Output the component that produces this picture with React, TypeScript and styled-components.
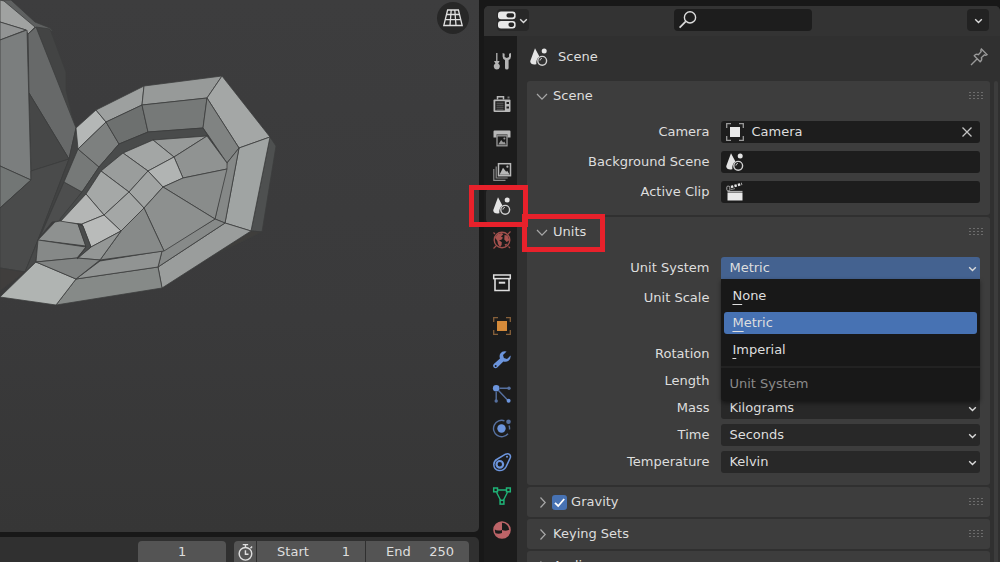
import React, { useState } from "react";
import styled, { createGlobalStyle, css } from "styled-components";

const GlobalStyle = createGlobalStyle`
  * { box-sizing: border-box; }
  body {
    margin: 0;
    background: #181818;
    color: #dedede;
    font-family: "DejaVu Sans", sans-serif;
    font-size: 13px;
    line-height: 18px;
  }
  button, input, select { font: inherit; color: inherit; }
  button { border: 0; padding: 0; background: none; cursor: pointer; }
  svg { display: block; flex: none; }
`;

/* ---------- Layout ---------- */

const Workspace = styled.div`
  display: grid;
  grid-template-columns: 13fr 14fr;
  grid-template-rows: minmax(0, 1fr);
  gap: 5px;
  height: 100vh;
  overflow: hidden;
`;

const MainColumn = styled.div`
  display: flex;
  flex-direction: column;
  gap: 5px;
  min-width: 0;
`;

const Viewport = styled.main`
  position: relative;
  flex: 1;
  min-height: 0;
  overflow: hidden;
  border-radius: 0 0 5px 0;
  background: linear-gradient(#3d3d3e, #3a3a3b 60%, #363636);
`;

const ViewToggle = styled.button`
  position: absolute;
  top: 2px;
  right: 10px;
  display: grid;
  place-items: center;
  width: 32px;
  height: 32px;
  border-radius: 50%;
  background: #272727;
`;

const Timeline = styled.footer`
  display: flex;
  justify-content: flex-end;
  gap: 8px;
  padding: 4px 10px 0 0;
  border-radius: 0 5px 0 0;
  background: #303030;
`;

const fieldBox = css`
  display: flex;
  align-items: center;
  height: 21px;
  background: #545454;
`;

const FrameInput = styled.input`
  ${fieldBox}
  width: 88px;
  border: 0;
  border-radius: 4px 4px 0 0;
  text-align: center;
`;

const RangeGroup = styled.div`
  display: flex;
  gap: 1px;
`;

const ClockButton = styled.button`
  ${fieldBox}
  justify-content: center;
  width: 22px;
  border-radius: 4px 0 0 0;
`;

const RangeField = styled.label<{ $last?: boolean }>`
  ${fieldBox}
  width: ${(p) => (p.$last ? 103 : 108)}px;
  padding: 0 15px 0 20px;
  border-radius: ${(p) => (p.$last ? "0 4px 0 0" : "0")};
`;

const RangeInput = styled.input`
  flex: 1;
  min-width: 0;
  padding: 0;
  border: 0;
  background: none;
  text-align: right;
`;

/* ---------- Properties editor ---------- */

const Editor = styled.aside`
  display: flex;
  flex-direction: column;
  min-width: 0;
  min-height: 0;
  margin-top: 6px;
  border-radius: 5px 5px 0 0;
  background: #303030;
`;

const EditorHeader = styled.header`
  display: grid;
  grid-template-columns: 1fr 138px 1fr;
  align-items: center;
  flex: none;
  height: 30px;
  padding: 0 11px 2px 13px;
  border-radius: 5px 5px 0 0;
  background: #333333;
`;

const EditorType = styled.button`
  display: flex;
  align-items: center;
  gap: 2px;
  width: 32px;
  height: 22px;
  border-radius: 4px;
  background: #282828;
`;

const SearchBox = styled.label`
  display: flex;
  align-items: center;
  gap: 4px;
  height: 22px;
  padding: 0 4px;
  border-radius: 4px;
  background: #1d1d1d;
`;

const SearchInput = styled.input`
  flex: 1;
  min-width: 0;
  border: 0;
  background: none;
  outline: 0;
`;

const OptionsButton = styled.button`
  display: grid;
  place-items: center;
  justify-self: end;
  width: 22px;
  height: 22px;
  border-radius: 4px;
  background: #222222;
`;

const EditorBody = styled.div`
  display: flex;
  flex: 1;
  min-height: 0;
`;

const TabStrip = styled.nav`
  display: flex;
  flex-direction: column;
  gap: 9px;
  flex: none;
  width: 33px;
  padding: 8px 0 0 2px;
  background: #1c1c1c;
`;

const TabGroup = styled.div`
  display: flex;
  flex-direction: column;
`;

const Tab = styled.button<{ $active?: boolean }>`
  position: relative;
  display: grid;
  place-items: center;
  height: 34px;
  border-radius: 4px 0 0 4px;
  background: ${(p) => (p.$active ? "#303030" : "transparent")};
`;

const Highlight = styled.span<{ $inset: string }>`
  position: absolute;
  z-index: 3;
  inset: ${(p) => p.$inset};
  border: 5px solid #e8212b;
  pointer-events: none;
`;

const Content = styled.section`
  flex: 1;
  min-width: 0;
  padding-left: 10px;
`;

const Breadcrumb = styled.div`
  display: flex;
  align-items: center;
  gap: 9px;
  height: 45px;
  padding: 0 11px 4px 2px;
`;

const PinButton = styled.button`
  margin-left: auto;
`;

const ScrollRow = styled.div`
  display: flex;
  gap: 4px;
  padding-right: 2px;
`;

const ScrollThumb = styled.div`
  width: 4px;
  border-radius: 2px;
  background: #3c3c3c;
`;

const PanelList = styled.div`
  display: flex;
  flex-direction: column;
  flex: 1;
  min-width: 0;
  gap: 2px;
`;

const Panel = styled.section`
  border-radius: 3px;
  background: #3d3d3d;
`;

const PanelHeader = styled.div`
  display: flex;
  align-items: center;
  height: 30px;
  padding: 0 7px 0 9px;
`;

const PanelToggle = styled.button`
  position: relative;
  display: flex;
  align-items: center;
  gap: 4px;
`;

const PanelTick = styled.label`
  display: flex;
  align-items: center;
  gap: 4px;
  margin-left: 3px;
`;

const GripSlot = styled.span`
  margin-left: auto;
`;

const PanelBody = styled.div`
  display: flex;
  flex-direction: column;
  gap: 7px;
  padding: 10px 10px 12px;
`;

const Rows = styled.div<{ $tight?: boolean }>`
  display: flex;
  flex-direction: column;
  gap: ${(p) => (p.$tight ? 5 : 8)}px;
`;

const Row = styled.div`
  display: grid;
  grid-template-columns: 2fr 3fr;
  align-items: center;
  gap: 12px;
  height: 22px;
`;

const RowLabel = styled.label`
  text-align: right;
  white-space: nowrap;
`;

const IdField = styled.div`
  display: flex;
  align-items: center;
  gap: 6px;
  height: 22px;
  padding: 0 7px 0 4px;
  border-radius: 3px;
  background: #1d1d1d;
`;

const IdInput = styled.input`
  flex: 1;
  min-width: 0;
  padding: 0;
  border: 0;
  outline: 0;
  background: none;
`;

const NumberInput = styled.input`
  width: 100%;
  height: 22px;
  border: 0;
  border-radius: 3px;
  background: #545454;
  text-align: center;
`;

const SelectWrap = styled.div`
  position: relative;
  display: grid;
  align-items: center;
`;

const SelectBox = styled.select<{ $open?: boolean }>`
  grid-area: 1 / 1;
  appearance: none;
  width: 100%;
  height: 22px;
  padding: 0 20px 0 8px;
  border: 0;
  outline: 0;
  border-radius: ${(p) => (p.$open ? "3px 3px 0 0" : "3px")};
  background: ${(p) => (p.$open ? "#446290" : "#282828")};
`;

const SelectArrow = styled.span`
  grid-area: 1 / 1;
  justify-self: end;
  margin-right: 3px;
  pointer-events: none;
`;

const Menu = styled.div`
  position: absolute;
  z-index: 2;
  top: 100%;
  left: 0;
  right: 0;
  display: flex;
  flex-direction: column;
  padding: 6px 3px 8px;
  border-radius: 0 0 4px 4px;
  background: #181818;
  box-shadow: 0 2px 4px rgba(0, 0, 0, 0.45);
`;

const MenuItem = styled.button<{ $selected?: boolean }>`
  height: 22px;
  margin-bottom: 5px;
  padding: 0 8px;
  border-radius: 3px;
  text-align: left;
  background: ${(p) => (p.$selected ? "#4772b3" : "transparent")};
`;

const Mnemonic = styled.span`
  text-decoration: underline;
  text-decoration-thickness: 1px;
  text-underline-offset: 4px;
`;

const MenuTitle = styled.div`
  margin: 0 -3px;
  padding: 7px 8px 0;
  border-top: 2px solid #222222;
  color: #8a8a8a;
`;

const CheckWrap = styled.span`
  display: grid;
  place-items: center;
`;

const CheckInput = styled.input`
  grid-area: 1 / 1;
  appearance: none;
  width: 15px;
  height: 15px;
  margin: 0;
  border-radius: 3px;
  background: #545454;
  &:checked { background: #4772b3; }
  & + svg { grid-area: 1 / 1; visibility: hidden; pointer-events: none; }
  &:checked + svg { visibility: visible; }
`;

/* ---------- Icons ---------- */

type IconProps = { size?: number; children: React.ReactNode };
const Icon = ({ size = 20, children }: IconProps) => (
  <svg width={size} height={size} viewBox="0 0 20 20" fill="none" aria-hidden="true">
    {children}
  </svg>
);

const Chevron = ({ open }: { open?: boolean }) => (
  <svg width="13" height="13" viewBox="0 0 13 13" fill="none" stroke="#a8a8a8" strokeWidth="1.2" aria-hidden="true">
    <path d={open ? "M1 4 6 9.2 11 4" : "M4.5 1.5 9.2 6.5 4.5 11.5"} />
  </svg>
);

const SmallArrow = () => (
  <svg width="9" height="7" viewBox="0 0 9 7" fill="none" stroke="#dcdcdc" strokeWidth="1.4" aria-hidden="true">
    <path d="M1.2 2.2 4.5 5.4 7.8 2.2" />
  </svg>
);

const Grip = () => (
  <svg width="15" height="8" viewBox="0 0 15 8" fill="#6c6c6c" aria-hidden="true">
    {[0, 3, 6].map((y) => [1, 5, 9, 13].map((x) => <rect key={`${x}-${y}`} x={x} y={y} width="2" height="1" />))}
  </svg>
);

const SceneIcon = () => (
  <Icon>
    <path d="M6 1.2 1.2 14.2Q1.6 17.6 5.8 17.4L7.4 17.2Q6.6 12.4 10.4 9.4Z" fill="#e4e4e4" />
    <circle cx="15.2" cy="4" r="2.5" fill="#e4e4e4" />
    <circle cx="13.2" cy="13.8" r="4.4" stroke="#d0d0d0" strokeWidth="1.4" />
    <path d="M10.9 13.6a2.3 2.3 0 0 1 2-2.2" stroke="#d0d0d0" />
  </Icon>
);

const ObjectIcon = ({ fill, frame }: { fill: string; frame: string }) => (
  <Icon>
    <rect x="5" y="5" width="10" height="10" fill={fill} />
    <path d="M1.7 6V1.7H6M14 1.7h4.3V6M18.3 14v4.3H14M6 18.3H1.7V14" stroke={frame} strokeWidth="1.3" />
  </Icon>
);

const ClipIcon = () => (
  <Icon>
    <rect x="2.5" y="10.5" width="15" height="8" fill="#e8e8e8" />
    <path d="M2.5 9.4h15" stroke="#bdbdbd" />
    <path d="M6 5 17 1.8" stroke="#e8e8e8" strokeWidth="2.4" strokeDasharray="2.4 1.2" />
    <rect x="1.8" y="4.2" width="3" height="4.5" rx="1" stroke="#a8a8a8" />
    <path d="M5.5 7.8 10 6.6" stroke="#888" />
  </Icon>
);

const PerspectiveIcon = () => (
  <svg width="22" height="20" viewBox="0 0 22 20" fill="none" stroke="#e0e0e0" strokeWidth="1.3" aria-hidden="true">
    <path d="M5.6 2h10.8L20.2 17.5H1.8zM9.2 2 8 17.5M12.8 2 14 17.5M4.6 6.5h12.8M3.4 11.6h15.2" />
  </svg>
);

const EditorTypeIcon = () => (
  <Icon>
    <rect x="1" y="1.600" width="17.600" height="7.600" rx="3" fill="#e8e8e8" />
    <rect x="9.500" y="3.200" width="7.600" height="4.400" rx="1.800" fill="#222" />
    <rect x="1" y="10.900" width="17.600" height="7.600" rx="3" fill="#e8e8e8" />
    <rect x="11.500" y="12.500" width="5.600" height="4.400" rx="1.800" fill="#222" />
  </Icon>
);

const SearchIcon = () => (
  <Icon>
    <circle cx="12" cy="7.400" r="5.600" stroke="#dcdcdc" strokeWidth="1.400" />
    <path d="M7.800 11.400 1.600 17.600" stroke="#dcdcdc" strokeWidth="1.700" />
  </Icon>
);

const PinIcon = () => (
  <Icon>
    <path
      d="M12.400 2 18 7.600Q16.600 8.600 15.400 7.900L12.400 10.600Q13.400 13.200 11.200 14.800L5.200 8.800Q6.800 6.600 9.400 7.600L12.100 4.600Q11.400 3.400 12.400 2ZM8 12 2 18"
      stroke="#999999"
      strokeWidth="1.400"
    />
  </Icon>
);

const CloseIcon = () => (
  <svg width="12" height="12" viewBox="0 0 12 12" fill="none" stroke="#c4c4c4" strokeWidth="1.300" aria-hidden="true">
    <path d="m1.500 1.500 9 9M10.500 1.500l-9 9" />
  </svg>
);

const ClockIcon = () => (
  <Icon size={18}>
    <circle cx="10.500" cy="12" r="7" stroke="#dedede" strokeWidth="1.600" />
    <path d="M10.500 8v4.400h3.400M7.500 1.800h6M10.500 2v3M16.100 5.800l1.800-1.800" stroke="#dedede" strokeWidth="1.600" />
  </Icon>
);

const TickIcon = () => (
  <svg width="13" height="13" viewBox="0 0 13 13" fill="none" stroke="#fff" strokeWidth="1.800" aria-hidden="true">
    <path d="M2 6.800 5.200 10 11.200 3" />
  </svg>
);

const ToolIcon = () => (
  <Icon>
    <path d="M4.800 2v8" stroke="#b4b4b4" strokeWidth="1.300" />
    <path d="M2 10h5.600L6.200 12.400Q8.400 13.600 7.800 16q-.6 2.600-3 2.600T1.800 16q-.6-2.400 1.600-3.600Z" fill="#b4b4b4" />
    <path
      d="M10.600 2v3.600q0 2.400 2.400 3.400V17q0 1.600 1.800 1.600t1.800-1.600V9q2.400-1 2.400-3.400V2l-2 .8V6l-2.200 1-2.200-1V2.800Z"
      fill="#b4b4b4"
    />
  </Icon>
);

const RenderIcon = () => (
  <Icon>
    <path d="M5.500 5.500V2.700h6v2.800" stroke="#b8b8b8" strokeWidth="1.500" />
    <rect x="1.500" y="5.500" width="17" height="12.500" rx="1" fill="#b8b8b8" />
    <rect x="3.300" y="7.200" width="9.500" height="9.200" fill="#1c1c1c" />
    <path d="M4.500 9.200h7M4.500 11.200h7M4.500 13.200h7M4.500 15.200h7" stroke="#777" strokeWidth=".8" />
    <path d="M14.500 9h2.500M14.500 13.500h2.500" stroke="#1c1c1c" strokeWidth="2" />
    <path d="M15.500 2.500h2v2h-2z" fill="#777" />
  </Icon>
);

const OutputIcon = () => (
  <Icon>
    <path d="M1.500 3.500q0-1 1-1h15q1 0 1 1v6h-3V6.500h-11v3h-3z" fill="#b8b8b8" />
    <rect x="5" y="7.800" width="10" height="10" stroke="#9a9a9a" strokeWidth="1.300" />
    <path d="m6.200 16.600 3-4.600 2 2.500 1-1 1.800 3.100z" fill="#9a9a9a" />
    <circle cx="12.400" cy="10.500" r="1" fill="#9a9a9a" />
  </Icon>
);

const LayersIcon = () => (
  <Icon>
    <rect x="6.500" y="1.700" width="12" height="12" stroke="#b8b8b8" strokeWidth="1.500" />
    <path d="m7.500 12.800 3.500-7 3.200 4 1-1 2.500 4z" fill="#b8b8b8" />
    <circle cx="15.400" cy="4.700" r="1.100" fill="#b8b8b8" />
    <path d="M4.200 4.500V16h11.500M1.800 7v11.400H13.500" stroke="#8a8a8a" strokeWidth="1.200" />
  </Icon>
);

const WorldIcon = () => (
  <Icon>
    <circle cx="10" cy="10" r="7.800" stroke="#a04f4c" strokeWidth="1.400" />
    <path
      d="M3 7.500 6 4l4-1 1.200 1.600L9 6.500l2 1.300-1.600 2-2.400.4 2.800 2-.2 2.800L8 17l-2-3-.6-3zM12.500 5l3 .6 1.800 4.600-2.600 1.800-2.400-2.600zM12.500 14.500l3-1-1.800 2.500z"
      fill="#a8524f"
    />
    <path d="m16 4 2.500-2.500M1.500 18.500 4 16M1.500 2.500l1.500 1.500M16.500 16.500l1.500 1.500" stroke="#a04f4c" strokeWidth="1.200" />
  </Icon>
);

const CollectionIcon = () => (
  <Icon>
    <rect x="1.700" y="2" width="16.600" height="3.600" stroke="#dedede" strokeWidth="1.500" />
    <path d="M3 5.600V17.500H17V5.600" stroke="#dedede" strokeWidth="1.600" />
    <path d="M6.800 9.700h6.400" stroke="#dedede" strokeWidth="2" />
  </Icon>
);

const WrenchIcon = () => (
  <Icon>
    <path
      d="M18.600 5.600 15 9 11.900 7.900 11 5 14.600 1.600Q10.600.4 8.400 3.600q-1.400 2.100-.4 4.800L1.800 14q-1.500 1.800 0 3.500 1.800 1.600 3.500 0l6.100-6.100q2.900.9 5.100-.7 2.500-1.900 2.100-5.100Z"
      fill="#6c95dd"
    />
    <circle cx="3.700" cy="15.900" r="1" fill="#1c1c1c" />
  </Icon>
);

const ParticlesIcon = () => (
  <Icon>
    <circle cx="4.200" cy="4.200" r="3.300" fill="#6c95dd" />
    <path d="M8 4.200h9M4.200 8v9M6.500 6.500 16 16.500" stroke="#56709f" strokeWidth="1.400" />
    <circle cx="17" cy="4.200" r="1.700" fill="#56709f" />
    <circle cx="4.200" cy="17" r="1.700" fill="#56709f" />
    <circle cx="16.600" cy="16.800" r="2" fill="#6c95dd" />
  </Icon>
);

const PhysicsIcon = () => (
  <Icon>
    <circle cx="9.500" cy="10.500" r="4.200" fill="#6c95dd" />
    <path d="M12.500 2.800A8.200 8.200 0 1 0 16 15.800M17 7.500q.8 2 .5 4" stroke="#56709f" strokeWidth="1.400" />
    <circle cx="16.500" cy="3.800" r="2.300" fill="#56709f" />
  </Icon>
);

const ConstraintIcon = () => (
  <Icon>
    <path
      d="M13.500 2.200Q16.500.9 18 3q1 1.700 0 3.400L14 14.800Q11.500 19 7 18.500 1.800 17.500 1.800 12.400 2 8.700 5.400 7Z"
      stroke="#6c95dd"
      strokeWidth="1.500"
    />
    <circle cx="7.800" cy="12.300" r="3.300" stroke="#6c95dd" strokeWidth="2.200" />
    <circle cx="15" cy="4.800" r="1" fill="#6c95dd" />
  </Icon>
);

const DataIcon = () => (
  <Icon>
    <path d="M5.500 4h9M4.500 6.200 8.700 14.500M15.500 6.200 11.300 14.500" stroke="#1fb377" strokeWidth="1.400" />
    <g stroke="#1fb377" strokeWidth="1.500">
      <rect x="1.700" y="2" width="3.800" height="3.800" />
      <rect x="14.500" y="2" width="3.800" height="3.800" />
      <rect x="8.100" y="14.300" width="3.800" height="3.800" />
    </g>
  </Icon>
);

const MaterialIcon = () => (
  <Icon>
    <circle cx="10" cy="10" r="8" stroke="#bd6468" strokeWidth="1.600" />
    <path d="M10 10V2Q3.500 2.500 2 9 5.500 11.500 10 10ZM10 10q4.500 1.500 8-.5-.5 8-8 8.500Z" fill="#bd6468" />
    <path d="M3 13q3.500 1.500 7 0v5Q5.500 17.500 3 13Z" fill="#bd6468" />
  </Icon>
);

/* ---------- Mesh in the 3D viewport ---------- */

const headFaces: [string, string][] = [
  ["0,0 11,0 35,22 50,28 53,31 36,29 28,34", "#5e6060"],
  ["0,0 4,1 35,27 28,34 26,30 0,22", "#a0a2a1"],
  ["0,22 26,30 0,40", "#929494"],
  ["36,27 50,29 66,72 66,90 75,128", "#434444"],
  ["28,34 36,27 76,128 69,159 29,93", "#676969"],
  ["29,93 69,159 31,171", "#464747"],
  ["0,40 27,30 31,180 0,166", "#7b7e7e"],
  ["0,166 31,180 0,208", "#727675"],
  ["31,171 69,159 38,240 25,272 0,268 0,208 31,180", "#4a4b4b"],
  ["0,268 25,272 0,291", "#403e3d"],
  ["38,240 25,272 36,262", "#484949"],
  ["76,128 78,149 64,182 38,240 69,159", "#424343"],
  ["64,182 82,192 60,221 52,222 40,237", "#4d4e4e"],
];

const earFaces: [string, string][] = [
  ["270,137 276,146 262,232 251,231", "#4e5050"],
  ["251,231 262,232 215,255", "#3f3e3c"],
  ["76,128 96,110 106,122 78,149", "#b4b7b6"],
  ["96,110 144,86 142,105 106,122", "#9da09f"],
  ["144,86 222,76 207,98 142,105", "#979a99"],
  ["222,76 270,137 239,148 207,98", "#a4a7a6"],
  ["270,137 251,231 225,223 239,148", "#a0a4a3"],
  ["251,231 162,288 158,267 225,223", "#9a9d9c"],
  ["162,288 56,305 76,279 158,267", "#868a88"],
  ["56,305 0,297 36,262 76,279", "#b0b4b2"],
  ["78,149 99,167 82,192 64,182", "#767978"],
  ["78,149 106,122 119,144 99,167", "#7d807f"],
  ["106,122 142,105 148,132 119,144", "#6d706f"],
  ["142,105 207,98 203,128 148,132", "#767978"],
  ["207,98 239,148 227,163 208,135 203,128", "#808382"],
  ["239,148 225,223 215,219 227,163", "#858887"],
  ["225,223 158,267 162,251 215,219", "#878a89"],
  ["158,267 76,279 100,261 162,251", "#919493"],
  ["82,192 99,167 119,144 148,132 203,128 208,136 153,140 123,153 101,171 86,194 60,222 60,219", "#494b4b"],
  ["153,140 207,136 174,157", "#979a99"],
  ["207,136 227,163 227,169 183,178 174,157", "#909392"],
  ["123,153 153,140 174,157 148,171", "#a3a6a5"],
  ["123,153 148,171 129,192 101,171", "#9a9d9c"],
  ["101,171 129,192 104,215 86,194", "#a5a8a7"],
  ["86,194 104,215 82,224 60,222", "#b4b6b5"],
  ["174,157 183,178 163,187 148,171", "#b1b4b3"],
  ["148,171 163,187 144,208 129,192", "#a1a4a3"],
  ["129,192 144,208 121,231 104,215", "#a4a7a6"],
  ["104,215 121,231 91,247 82,224", "#b9bbba"],
  ["183,178 227,169 215,219 163,187", "#898c8b"],
  ["163,187 215,219 164,251 144,208", "#8d908f"],
  ["144,208 164,251 100,260 121,231", "#878a89"],
  ["121,231 100,260 77,258 91,247", "#949796"],
  ["55,222 60,221 78,224 86,246 38,240", "#8e9190"],
  ["38,240 86,247 77,258 36,262", "#868988"],
  ["36,262 77,258 100,260 76,279", "#818483"],
  ["78,224 83,226 91,247 77,259 86,247", "#4a4c4c"],
];

const Mesh = () => (
  <svg width="300" height="320" viewBox="0 0 300 320" strokeLinejoin="round" role="img" aria-label="Low-poly head with ear">
    {[...headFaces, ...earFaces].map(([points, fill]) => (
      <polygon key={points} points={points} fill={fill} stroke="#3c3e3e" strokeWidth="0.8" />
    ))}
  </svg>
);

/* ---------- Parts ---------- */

const tabGroups: { name: string; icon: React.ReactNode }[][] = [
  [{ name: "Tool", icon: <ToolIcon /> }],
  [
    { name: "Render", icon: <RenderIcon /> },
    { name: "Output", icon: <OutputIcon /> },
    { name: "View Layer", icon: <LayersIcon /> },
    { name: "Scene", icon: <SceneIcon /> },
    { name: "World", icon: <WorldIcon /> },
  ],
  [{ name: "Collection", icon: <CollectionIcon /> }],
  [
    { name: "Object", icon: <ObjectIcon fill="#d48a3a" frame="#86603a" /> },
    { name: "Modifiers", icon: <WrenchIcon /> },
    { name: "Particles", icon: <ParticlesIcon /> },
    { name: "Physics", icon: <PhysicsIcon /> },
    { name: "Constraints", icon: <ConstraintIcon /> },
    { name: "Data", icon: <DataIcon /> },
    { name: "Material", icon: <MaterialIcon /> },
  ],
];

type FieldProps = { id: string; label: string };

const IdRow = ({ id, label, icon, value, clearable }: FieldProps & { icon: React.ReactNode; value?: string; clearable?: boolean }) => (
  <Row>
    <RowLabel htmlFor={id}>{label}</RowLabel>
    <IdField>
      {icon}
      <IdInput id={id} defaultValue={value} />
      {clearable && (
        <button aria-label={`Clear ${label}`}>
          <CloseIcon />
        </button>
      )}
    </IdField>
  </Row>
);

const SelectRow = ({ id, label, options }: FieldProps & { options: string[] }) => (
  <Row>
    <RowLabel htmlFor={id}>{label}</RowLabel>
    <SelectWrap>
      <SelectBox id={id}>
        {options.map((o) => (
          <option key={o}>{o}</option>
        ))}
      </SelectBox>
      <SelectArrow>
        <SmallArrow />
      </SelectArrow>
    </SelectWrap>
  </Row>
);

const PanelHead = ({ title, open, marked, checkable }: { title: string; open?: boolean; marked?: boolean; checkable?: boolean }) => (
  <PanelHeader>
    <PanelToggle aria-expanded={!!open} aria-label={title}>
      <Chevron open={open} />
      {!checkable && title}
      {marked && <Highlight $inset="-9px -19px -11px -14px" />}
    </PanelToggle>
    {checkable && (
      <PanelTick>
        <CheckWrap>
          <CheckInput type="checkbox" defaultChecked />
          <TickIcon />
        </CheckWrap>
        {title}
      </PanelTick>
    )}
    <GripSlot>
      <Grip />
    </GripSlot>
  </PanelHeader>
);

const unitSystems = ["None", "Metric", "Imperial"];

export default function App() {
  const [system, setSystem] = useState("Metric");

  return (
    <>
      <GlobalStyle />
      <Workspace>
        <MainColumn>
          <Viewport>
            <Mesh />
            <ViewToggle aria-label="Toggle perspective">
              <PerspectiveIcon />
            </ViewToggle>
          </Viewport>
          <Timeline>
            <FrameInput aria-label="Current frame" defaultValue="1" />
            <RangeGroup>
              <ClockButton aria-label="Use preview range">
                <ClockIcon />
              </ClockButton>
              <RangeField>
                Start
                <RangeInput defaultValue="1" />
              </RangeField>
              <RangeField $last>
                End
                <RangeInput defaultValue="250" />
              </RangeField>
            </RangeGroup>
          </Timeline>
        </MainColumn>

        <Editor>
          <EditorHeader>
            <EditorType aria-label="Editor type">
              <EditorTypeIcon />
              <SmallArrow />
            </EditorType>
            <SearchBox>
              <SearchIcon />
              <SearchInput aria-label="Search" />
            </SearchBox>
            <OptionsButton aria-label="Options">
              <SmallArrow />
            </OptionsButton>
          </EditorHeader>

          <EditorBody>
            <TabStrip>
              {tabGroups.map((group) => (
                <TabGroup key={group[0].name}>
                  {group.map((tab) => (
                    <Tab key={tab.name} aria-label={tab.name} $active={tab.name === "Scene"}>
                      {tab.icon}
                      {tab.name === "Scene" && <Highlight $inset="-4px -11px -4px -17px" />}
                    </Tab>
                  ))}
                </TabGroup>
              ))}
            </TabStrip>

            <Content>
              <Breadcrumb>
                <SceneIcon />
                Scene
                <PinButton aria-label="Pin">
                  <PinIcon />
                </PinButton>
              </Breadcrumb>

              <ScrollRow>
                <PanelList>
                  <Panel>
                    <PanelHead title="Scene" open />
                    <PanelBody>
                      <Rows>
                        <IdRow id="camera" label="Camera" value="Camera" icon={<ObjectIcon fill="#e8e8e8" frame="#9a9a9a" />} clearable />
                        <IdRow id="background" label="Background Scene" icon={<SceneIcon />} />
                        <IdRow id="clip" label="Active Clip" icon={<ClipIcon />} />
                      </Rows>
                    </PanelBody>
                  </Panel>

                  <Panel>
                    <PanelHead title="Units" open marked />
                    <PanelBody>
                      <Rows>
                        <Row>
                          <RowLabel htmlFor="system">Unit System</RowLabel>
                          <SelectWrap>
                            <SelectBox id="system" $open value={system} onChange={(e) => setSystem(e.target.value)}>
                              {unitSystems.map((s) => (
                                <option key={s}>{s}</option>
                              ))}
                            </SelectBox>
                            <SelectArrow>
                              <SmallArrow />
                            </SelectArrow>
                            <Menu>
                              {unitSystems.map((s) => (
                                <MenuItem key={s} $selected={s === system} onClick={() => setSystem(s)}>
                                  <Mnemonic>{s[0]}</Mnemonic>
                                  {s.slice(1)}
                                </MenuItem>
                              ))}
                              <MenuTitle>Unit System</MenuTitle>
                            </Menu>
                          </SelectWrap>
                        </Row>
                        <Row>
                          <RowLabel htmlFor="scale">Unit Scale</RowLabel>
                          <NumberInput id="scale" />
                        </Row>
                      </Rows>
                      <Rows $tight>
                        <Row />
                        <SelectRow id="rotation" label="Rotation" options={["Degrees", "Radians"]} />
                        <SelectRow id="length" label="Length" options={["Meters", "Kilometers", "Centimeters"]} />
                        <SelectRow id="mass" label="Mass" options={["Kilograms", "Tonnes", "Grams"]} />
                        <SelectRow id="time" label="Time" options={["Seconds", "Minutes", "Hours"]} />
                        <SelectRow id="temperature" label="Temperature" options={["Kelvin", "Celsius"]} />
                      </Rows>
                    </PanelBody>
                  </Panel>

                  <Panel>
                    <PanelHead title="Gravity" checkable />
                  </Panel>
                  <Panel>
                    <PanelHead title="Keying Sets" />
                  </Panel>
                  <Panel>
                    <PanelHead title="Audio" />
                  </Panel>
                </PanelList>
                <ScrollThumb />
              </ScrollRow>
            </Content>
          </EditorBody>
        </Editor>
      </Workspace>
    </>
  );
}
